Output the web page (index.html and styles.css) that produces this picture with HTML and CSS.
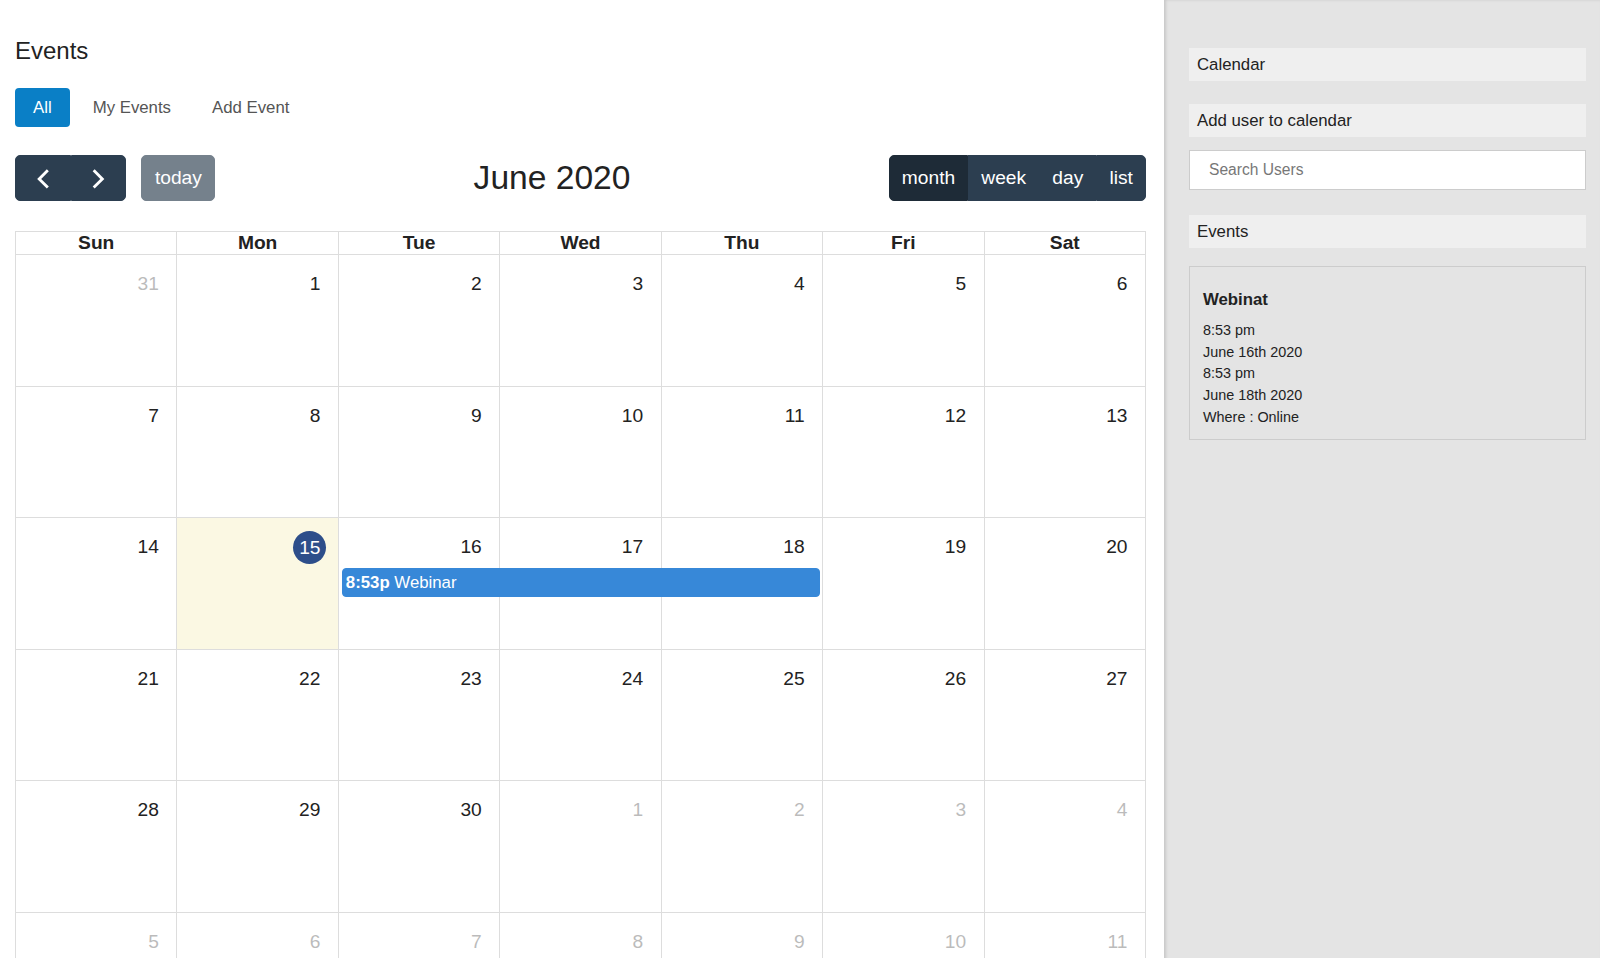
FILE: index.html
```html
<!DOCTYPE html>
<html lang="en">
<head>
  <meta charset="UTF-8">
  <meta name="viewport" content="width=device-width, initial-scale=1">
  <title>Events</title>
  <link rel="stylesheet" href="styles.css">
</head>
<body>
  <div class="page">
    <main class="main">
      <h1 class="page-title">Events</h1>

      <nav class="tabs">
        <a class="tab active" href="#">All</a>
        <a class="tab" href="#">My Events</a>
        <a class="tab" href="#">Add Event</a>
      </nav>

      <div class="calendar">
        <div class="toolbar">
          <div class="toolbar-left">
            <div class="btn-group">
              <button class="btn btn-icon" aria-label="prev">
                <svg viewBox="0 0 28 28"><polyline points="18.5,6 10,14.5 18.5,23" /></svg>
              </button>
              <button class="btn btn-icon" aria-label="next">
                <svg viewBox="0 0 28 28"><polyline points="9.5,6 18,14.5 9.5,23" /></svg>
              </button>
            </div>
            <button class="btn btn-today">today</button>
          </div>
          <h2 class="cal-title">June 2020</h2>
          <div class="btn-group">
            <button class="btn active">month</button>
            <button class="btn">week</button>
            <button class="btn">day</button>
            <button class="btn">list</button>
          </div>
        </div>

        <div class="cal-head">
          <div class="head-cell">Sun</div>
          <div class="head-cell">Mon</div>
          <div class="head-cell">Tue</div>
          <div class="head-cell">Wed</div>
          <div class="head-cell">Thu</div>
          <div class="head-cell">Fri</div>
          <div class="head-cell">Sat</div>
        </div>

        <div class="cal-body">
          <div class="week">
            <div class="day other"><div class="day-top">31</div></div>
            <div class="day"><div class="day-top">1</div></div>
            <div class="day"><div class="day-top">2</div></div>
            <div class="day"><div class="day-top">3</div></div>
            <div class="day"><div class="day-top">4</div></div>
            <div class="day"><div class="day-top">5</div></div>
            <div class="day"><div class="day-top">6</div></div>
          </div>
          <div class="week">
            <div class="day"><div class="day-top">7</div></div>
            <div class="day"><div class="day-top">8</div></div>
            <div class="day"><div class="day-top">9</div></div>
            <div class="day"><div class="day-top">10</div></div>
            <div class="day"><div class="day-top">11</div></div>
            <div class="day"><div class="day-top">12</div></div>
            <div class="day"><div class="day-top">13</div></div>
          </div>
          <div class="week">
            <div class="day"><div class="day-top">14</div></div>
            <div class="day today"><div class="day-top"><span class="today-mark">15</span></div></div>
            <div class="day"><div class="day-top">16</div></div>
            <div class="day"><div class="day-top">17</div></div>
            <div class="day"><div class="day-top">18</div></div>
            <div class="day"><div class="day-top">19</div></div>
            <div class="day"><div class="day-top">20</div></div>
            <a class="event" href="#"><b>8:53p</b> Webinar</a>
          </div>
          <div class="week">
            <div class="day"><div class="day-top">21</div></div>
            <div class="day"><div class="day-top">22</div></div>
            <div class="day"><div class="day-top">23</div></div>
            <div class="day"><div class="day-top">24</div></div>
            <div class="day"><div class="day-top">25</div></div>
            <div class="day"><div class="day-top">26</div></div>
            <div class="day"><div class="day-top">27</div></div>
          </div>
          <div class="week">
            <div class="day"><div class="day-top">28</div></div>
            <div class="day"><div class="day-top">29</div></div>
            <div class="day"><div class="day-top">30</div></div>
            <div class="day other"><div class="day-top">1</div></div>
            <div class="day other"><div class="day-top">2</div></div>
            <div class="day other"><div class="day-top">3</div></div>
            <div class="day other"><div class="day-top">4</div></div>
          </div>
          <div class="week">
            <div class="day other"><div class="day-top">5</div></div>
            <div class="day other"><div class="day-top">6</div></div>
            <div class="day other"><div class="day-top">7</div></div>
            <div class="day other"><div class="day-top">8</div></div>
            <div class="day other"><div class="day-top">9</div></div>
            <div class="day other"><div class="day-top">10</div></div>
            <div class="day other"><div class="day-top">11</div></div>
          </div>
        </div>
      </div>
    </main>

    <aside class="sidebar">
      <div class="side-box">Calendar</div>
      <div class="side-box tight">Add user to calendar</div>
      <input class="search" type="text" placeholder="Search Users">
      <div class="side-box events-head">Events</div>

      <div class="event-card">
        <h3>Webinat</h3>
        <p>8:53 pm</p>
        <p>June 16th 2020</p>
        <p>8:53 pm</p>
        <p>June 18th 2020</p>
        <p>Where : Online</p>
      </div>
    </aside>
  </div>
</body>
</html>
```

FILE: styles.css
```css
html, body {
  margin: 0;
  padding: 0;
  height: 100%;
  overflow: hidden;
}
body {
  font-family: "Liberation Sans", Arial, sans-serif;
  color: #222;
  background: #fff;
}
.page {
  display: grid;
  grid-template-columns: 1164px 1fr;
  height: 100vh;
}
.main {
  padding: 37px 18px 0 15px;
  background: #fff;
}
.page-title {
  margin: 0;
  font-size: 24px;
  line-height: 27.6px;
  font-weight: normal;
}
/* Tabs */
.tabs {
  display: flex;
  gap: 5px;
  margin-top: 23px;
}
.tab {
  display: block;
  height: 39px;
  line-height: 39px;
  padding: 0 18px;
  font-size: 16.8px;
  color: #555;
  text-decoration: none;
  border-radius: 4px;
}
.tab.active {
  background: #0a7fc6;
  color: #fff;
}
/* Calendar toolbar */
.calendar {
  margin-top: 28px;
}
.toolbar {
  display: flex;
  align-items: center;
  justify-content: space-between;
  margin-bottom: 30px;
}
.toolbar-left {
  display: flex;
  align-items: center;
}
.btn-group {
  display: flex;
}
.btn {
  font-family: inherit;
  font-size: 19.2px;
  line-height: 28.8px;
  padding: 8px 12.1px;
  color: #fff;
  background: #2c3e50;
  border: 1px solid #2c3e50;
  border-radius: 0;
  cursor: pointer;
}
.btn-icon {
  padding: 8px 12.6px;
}
.btn svg {
  display: block;
  width: 28.5px;
  height: 28.8px;
  fill: none;
  stroke: #fff;
  stroke-width: 2.8;
}
.btn-group .btn:first-child {
  border-radius: 5px 0 0 5px;
}
.btn-group .btn:last-child {
  border-radius: 0 5px 5px 0;
}
.btn.active {
  background: #1e2b37;
  border-color: #1e2b37;
}
.btn-today {
  margin-left: 15px;
  padding: 8px 12.5px;
  border-radius: 5px;
  opacity: 0.65;
}
.cal-title {
  margin: 0;
  font-size: 33.6px;
  font-weight: normal;
  line-height: 40px;
}
/* Grid */
.cal-head {
  display: grid;
  grid-template-columns: repeat(7, 1fr);
  border-top: 1px solid #ddd;
  border-left: 1px solid #ddd;
}
.head-cell {
  text-align: center;
  font-weight: bold;
  font-size: 19.2px;
  line-height: 22px;
  border-right: 1px solid #ddd;
  border-bottom: 1px solid #ddd;
}
.cal-body {
  border-left: 1px solid #ddd;
}
.week {
  display: grid;
  grid-template-columns: repeat(7, minmax(0, 1fr));
  grid-template-rows: 131.5px;
}
.day {
  grid-row: 1;
  border-right: 1px solid #ddd;
  border-bottom: 1px solid #ddd;
}
.day:nth-child(1) { grid-column: 1; }
.day:nth-child(2) { grid-column: 2; }
.day:nth-child(3) { grid-column: 3; }
.day:nth-child(4) { grid-column: 4; }
.day:nth-child(5) { grid-column: 5; }
.day:nth-child(6) { grid-column: 6; }
.day:nth-child(7) { grid-column: 7; }
.day-top {
  display: flex;
  justify-content: flex-end;
  align-items: center;
  height: 28.8px;
  padding: 15px 17.5px 0 0;
  font-size: 19.2px;
  line-height: 28.8px;
  color: #222;
}
.day.other .day-top {
  opacity: 0.3;
}
.day.today {
  background: #fbf8e3;
}
.today-mark {
  width: 33px;
  height: 33px;
  line-height: 33px;
  margin-right: -6px;
  text-align: center;
  border-radius: 50%;
  background: #2d4e8a;
  color: #fff;
}
.event {
  grid-row: 1;
  grid-column: 3 / span 3;
  align-self: start;
  margin: 49.5px 3px 0;
  height: 27.6px;
  line-height: 27.6px;
  padding: 0 3px;
  font-size: 16.8px;
  color: #fff;
  text-decoration: none;
  background: #3788d8;
  border: 1px solid #3788d8;
  border-radius: 4px;
  white-space: nowrap;
  overflow: hidden;
}
/* Sidebar */
.sidebar {
  background: #e4e4e4;
  box-shadow: inset 2px 0 3px rgba(0, 0, 0, 0.12);
  padding: 48px 14px 0 25px;
}
.side-box {
  background: #efefef;
  font-size: 16.8px;
  line-height: 21px;
  padding: 6px 8px;
  margin-bottom: 23px;
}
.side-box.tight {
  margin-bottom: 13px;
}
.side-box.events-head {
  margin-bottom: 18px;
}
.search {
  display: block;
  box-sizing: border-box;
  width: 100%;
  height: 40px;
  padding: 0 19px;
  margin-bottom: 25px;
  font-family: inherit;
  font-size: 15.6px;
  color: #333;
  background: #fff;
  border: 1px solid #ccc;
  border-radius: 0;
  outline: none;
}
.search::placeholder {
  color: #777;
}
.event-card {
  padding: 22px 13px 10px;
  border: 1px solid #ccc;
}
.event-card h3 {
  margin: 0 0 10px;
  font-size: 16.8px;
  line-height: 21px;
}
.event-card p {
  margin: 0;
  font-size: 14.4px;
  line-height: 21.7px;
}
```
